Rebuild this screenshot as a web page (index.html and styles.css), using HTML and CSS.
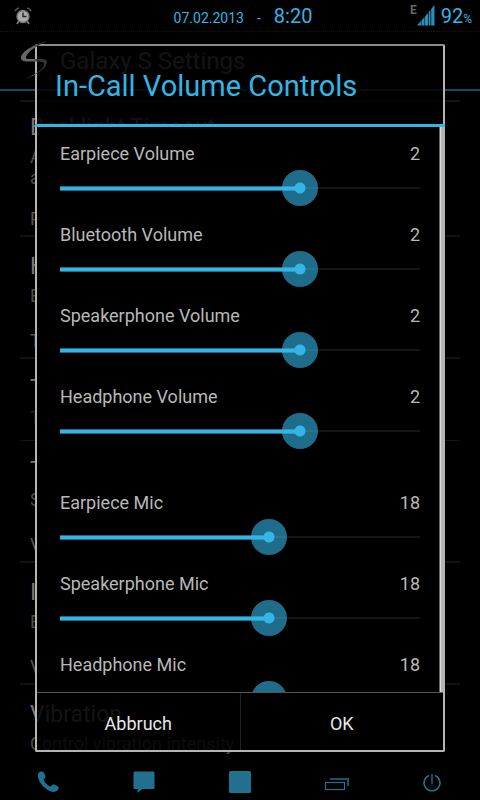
FILE: index.html
```
<!DOCTYPE html>
<html lang="de">

<head>
    <meta charset="UTF-8">
    <meta name="viewport" content="width=device-width, initial-scale=1">
    <title>In-Call Volume Controls</title>
    <link rel="stylesheet" href="styles.css">
</head>

<body>

    <header class="status-bar">
        <svg class="alarm-icon" viewBox="0 0 18 18" width="18" height="18">
            <path d="M1 4 Q2 1.5 5 1 M13 1 Q16 1.5 17 4" fill="none" stroke="#555" stroke-width="1.6" />
            <path d="M5 14 L3 17 M13 14 L15 17" stroke="#777" stroke-width="1.8" />
            <circle cx="9" cy="9.5" r="6" fill="#aaa" stroke="#777" stroke-width="1.4" />
            <path d="M9 5.5 V9.5 H12.5" fill="none" stroke="#222" stroke-width="1.4" />
        </svg>
        <div class="clock">
            <span class="date">07.02.2013</span>
            <span class="date">-</span>
            <span class="time">8:20</span>
        </div>
        <div class="status-right">
            <span class="network">E</span>
            <svg class="signal-icon" viewBox="0 0 18 21" width="18" height="21">
                <path d="M0 20.500 L4 16 V20.500 Z M4.500 20.500 V15.500 L7.500 12 V20.500 Z M8 20.500 V11.500 L11 8 V20.500 Z M11.700 20.500 V7 L13.500 5 V20.500 Z M14.200 20.500 V4 L17.500 0 V20.500 Z" fill="#2790b8" />
            </svg>
            <span class="battery">92<small>%</small></span>
        </div>
    </header>

    <main class="screen">

        <!-- Settings list behind the dialog -->
        <div class="settings">
            <div class="action-bar">
                <svg class="logo" viewBox="0 0 28 40" width="28" height="40">
                    <defs>
                        <linearGradient id="logoFade" x1="0" x2="1" y1="0" y2="0">
                            <stop offset="0.5" stop-color="#666" />
                            <stop offset="0.6" stop-color="#333" />
                        </linearGradient>
                    </defs>
                    <path d="M28 0 C17 2 1 10 1 17 C1 21 7 20.500 14 20.500 C22 20.500 24.500 21 24 24 C23 29 12 35 3 39 C14 35 27 28 27 21 C27 17.500 22 18 15 18 C9 18 5 18.500 6 16 C8 10 18 4 28 0 Z" fill="url(#logoFade)" />
                </svg>
                <span class="app-name">Galaxy S Settings</span>
            </div>
            <div class="list">
                <div class="category empty"></div>
                <div class="pref tall">
                    <div class="pref-title">Backlight Timeout</div>
                    <div class="pref-summary">A<br>a</div>
                </div>
                <div class="category">P</div>
                <div class="pref">
                    <div class="pref-title">H</div>
                    <div class="pref-summary">E</div>
                </div>
                <div class="category">T</div>
                <div class="pref divided">
                    <div class="pref-title">T</div>
                    <div class="pref-summary disabled">T</div>
                </div>
                <div class="pref">
                    <div class="pref-title">T</div>
                    <div class="pref-summary">S</div>
                </div>
                <div class="category">V</div>
                <div class="pref">
                    <div class="pref-title">I</div>
                    <div class="pref-summary">E</div>
                </div>
                <div class="category">V</div>
                <div class="pref">
                    <div class="pref-title">Vibration</div>
                    <div class="pref-summary">Control vibration intensity</div>
                </div>
            </div>
        </div>

        <form class="dialog" role="dialog" aria-labelledby="dialogTitle">
            <h1 class="dialog-title" id="dialogTitle">In-Call Volume Controls</h1>

            <div class="dialog-content">
                <div class="group">
                    <div class="control">
                        <label for="earVol">Earpiece Volume</label>
                        <output for="earVol">2</output>
                        <input type="range" id="earVol" min="0" max="3" value="2">
                    </div>
                    <div class="control">
                        <label for="btVol">Bluetooth Volume</label>
                        <output for="btVol">2</output>
                        <input type="range" id="btVol" min="0" max="3" value="2">
                    </div>
                    <div class="control">
                        <label for="spkVol">Speakerphone Volume</label>
                        <output for="spkVol">2</output>
                        <input type="range" id="spkVol" min="0" max="3" value="2">
                    </div>
                    <div class="control">
                        <label for="headVol">Headphone Volume</label>
                        <output for="headVol">2</output>
                        <input type="range" id="headVol" min="0" max="3" value="2">
                    </div>
                </div>
                <div class="group">
                    <div class="control">
                        <label for="earMic">Earpiece Mic</label>
                        <output for="earMic">18</output>
                        <input type="range" id="earMic" min="0" max="31" value="18">
                    </div>
                    <div class="control">
                        <label for="spkMic">Speakerphone Mic</label>
                        <output for="spkMic">18</output>
                        <input type="range" id="spkMic" min="0" max="31" value="18">
                    </div>
                    <div class="control">
                        <label for="headMic">Headphone Mic</label>
                        <output for="headMic">18</output>
                        <input type="range" id="headMic" min="0" max="31" value="18">
                    </div>
                </div>
                <div class="scrollbar"></div>
            </div>

            <div class="dialog-buttons">
                <button type="button">Abbruch</button>
                <button type="button">OK</button>
            </div>
        </form>

    </main>

    <nav class="nav-bar">
        <button type="button" aria-label="Phone">
            <svg viewBox="0 0 22 22" width="22" height="22">
                <path d="M1.500 2 C3 0 6 0 7 2 L8.500 5 C8.500 7 7 7.500 6.500 8.500 C7.500 11.500 10.500 14.500 13.500 15.500 C14.500 15 15 13 17 13.500 L20.500 15 C22 16 22 18 20.500 19.500 C18 21.500 14 21.500 10 18.500 C5 15 -1 8 1.500 2 Z" fill="#20708f" />
            </svg>
        </button>
        <button type="button" aria-label="Messages">
            <svg viewBox="0 0 22 22" width="22" height="22">
                <path d="M1.500 0.500 H20.500 Q21.500 0.500 21.500 1.500 V17 Q21.500 18 20.500 18 H9.500 L4 22 L5 18 H1.500 Q0.500 18 0.500 17 V1.500 Q0.500 0.500 1.500 0.500 Z" fill="#20708f" />
            </svg>
        </button>
        <button type="button" aria-label="Home">
            <svg viewBox="0 0 22 22" width="22" height="22">
                <rect width="22" height="22" rx="1.500" fill="#20708f" />
            </svg>
        </button>
        <button type="button" aria-label="Recent apps">
            <svg viewBox="0 0 26 22" width="26" height="22">
                <rect x="2.500" y="11.500" width="19" height="7" fill="none" stroke="#20708f" stroke-width="1.200" />
                <path d="M7 8 H25 V15" fill="none" stroke="#18536a" stroke-width="2" />
            </svg>
        </button>
        <button type="button" aria-label="Power">
            <svg viewBox="0 0 22 22" width="22" height="22">
                <path d="M8 4.500 A8 8 0 1 0 14 4.500 M11 3 V13.500" fill="none" stroke="#20708f" stroke-width="1.400" />
            </svg>
        </button>
    </nav>

    <script>
        // Paints the filled part of a slider up to its thumb
        function updateSlider(input) {
            input.style.setProperty('--level', input.value / input.max);
            document.querySelector(`output[for="${input.id}"]`).textContent = input.value;
        }

        document.querySelectorAll('input[type="range"]').forEach(input => {
            updateSlider(input);
            input.addEventListener('input', () => updateSlider(input));
        });
    </script>

</body>

</html>
```
FILE: styles.css
```
* {
    box-sizing: border-box;
}

body {
    margin: 0;
    height: 100vh;
    display: flex;
    flex-direction: column;
    overflow: hidden;
    background-color: #000;
    color: #b8b8b8;
    font-family: Roboto, "Liberation Sans", sans-serif;
}

button {
    border: none;
    padding: 0;
    background: none;
    font-family: inherit;
}

/* Status bar */
.status-bar {
    display: grid;
    grid-template-columns: 1fr auto 1fr;
    align-items: center;
    height: 32px;
    padding: 0 8px 0 14px;
    border-bottom: 1px dotted #151515;
    color: #33b5e5;
}

.clock {
    display: flex;
    align-items: baseline;
    gap: 13px;
}

.date {
    font-size: 14px;
}

.time,
.battery {
    font-size: 20px;
}

.status-right {
    display: flex;
    justify-content: flex-end;
    align-items: center;
}

.network {
    align-self: flex-start;
    color: #666;
    font-size: 12px;
    font-weight: bold;
    line-height: 12px;
}

.signal-icon {
    margin-right: 6px;
}

.battery small {
    font-size: 12px;
}

/* Settings list */
.screen {
    position: relative;
    flex: 1;
    min-height: 0;
}

.settings {
    height: 100%;
    overflow: hidden;
}

.action-bar {
    display: flex;
    align-items: center;
    gap: 12px;
    height: 59px;
    padding: 0 20px;
    border-bottom: 2px solid #174a5e;
}

.logo {
    position: relative;
    z-index: 2;
}

.app-name {
    color: #777;
    font-size: 24px;
}

.list {
    padding: 0 20px;
}

.category {
    height: 30px;
    padding: 0 10px;
    border-bottom: 2px solid #0e1415;
    color: #555;
    font-size: 18px;
    line-height: 23px;
}

.category.empty {
    height: 11px;
}

.pref {
    height: 92px;
    padding: 16px 10px 0;
}

.pref.tall {
    height: 105px;
    padding-top: 12px;
}

.pref.divided {
    height: 82px;
    border-bottom: 1px solid #141414;
}

.pref-title {
    color: #777;
    font-size: 23px;
    line-height: 28px;
}

.pref-summary {
    padding-top: 4px;
    color: #4c4c4c;
    font-size: 18px;
    line-height: 21px;
}

.pref-summary.disabled {
    color: #222;
}

/* Dialog */
.dialog {
    position: absolute;
    inset: 12px 35px;
    display: flex;
    flex-direction: column;
    border: 2px solid #b4b4b4;
    border-top-color: #8c8c8c;
    border-radius: 2px;
}

.dialog-title {
    margin: 0 -2px;
    padding: 19px 20px 17px;
    border-bottom: 3px solid #33b5e5;
    background: linear-gradient(rgba(0, 0, 0, 0.84), rgba(0, 0, 0, 0.84)) 2px 0 / calc(100% - 4px) 100% no-repeat padding-box;
    color: #33b5e5;
    font-size: 29px;
    font-weight: normal;
    line-height: 42px;
}

.dialog-content {
    position: relative;
    flex: 1;
    min-height: 0;
    overflow: hidden;
    margin-right: -2px;
    padding: 0 25px 0 23px;
    background-color: #000;
}

.group {
    margin-bottom: 25px;
}

.control {
    display: grid;
    grid-template-columns: 1fr auto;
    row-gap: 5px;
    height: 81px;
    padding-top: 16px;
    align-content: start;
    font-size: 18px;
    line-height: 22px;
}

.control input {
    --level: 0;
    grid-column: 1 / -1;
    appearance: none;
    width: auto;
    height: 36px;
    margin: 0 -18px;
    background: none;
}

/* The track is inset by the thumb radius on each side */
.control input::-webkit-slider-runnable-track {
    height: 36px;
    background:
        linear-gradient(#33b5e5, #33b5e5) 18px 17px / calc((100% - 36px) * var(--level)) 3px no-repeat,
        linear-gradient(#1f6c89, #1f6c89) 18px 16px / calc((100% - 36px) * var(--level)) 5px no-repeat,
        linear-gradient(90deg, transparent 18px, #111717 18px calc(100% - 18px), transparent 0) 0 17px / 100% 2px no-repeat;
}

.control input::-webkit-slider-thumb {
    appearance: none;
    width: 36px;
    height: 36px;
    border-radius: 50%;
    background: radial-gradient(circle, #33b5e5 5px, rgba(51, 181, 229, 0.6) 6px);
}

.scrollbar {
    position: absolute;
    top: 0;
    right: 0;
    bottom: 0;
    width: 6px;
    background: linear-gradient(90deg, #666 1px, #ddd 1px 2px, #b4b4b4 2px);
}

.dialog-buttons {
    display: flex;
    height: 58px;
    border-top: 1px solid #555;
    background-color: rgba(0, 0, 0, 0.84);
}

.dialog-buttons button {
    flex: 1;
    padding-top: 4px;
    color: #e8e8e8;
    font-size: 18px;
}

.dialog-buttons button + button {
    border-left: 1px solid #222;
}

/* Navigation bar */
.nav-bar {
    display: flex;
    height: 36px;
}

.nav-bar button {
    display: flex;
    flex: 1;
    justify-content: center;
    align-items: center;
}
```
